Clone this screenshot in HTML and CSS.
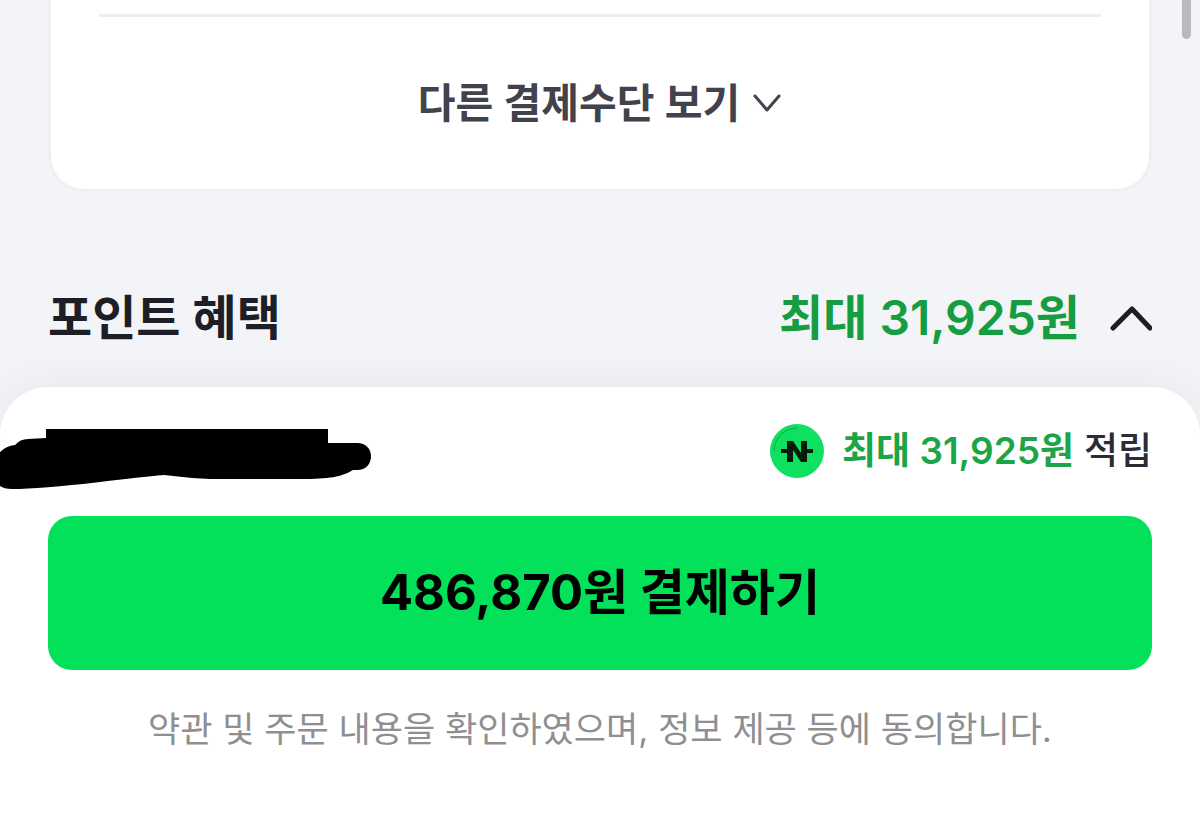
FILE: index.html
```html
<!DOCTYPE html>
<html lang="ko">
<head>
<meta charset="utf-8">
<meta name="viewport" content="width=device-width, initial-scale=1">
<title>결제하기</title>
<link rel="stylesheet" href="styles.css">
</head>
<body>
<main class="content">
  <section class="card">
    <hr class="divider">
    <button class="more" type="button">다른 결제수단 보기
      <svg class="more-icon" viewBox="0 0 30 20" aria-hidden="true"><path d="M3 3L15 17L27 3"/></svg>
    </button>
  </section>
  <section class="benefit">
    <h2 class="benefit-title">포인트 혜택</h2>
    <button class="benefit-toggle" type="button">최대 31,925원
      <svg class="benefit-icon" viewBox="0 0 44 28" aria-hidden="true"><path d="M5 24L24 5L42 24"/></svg>
    </button>
  </section>
</main>
<div class="scroll-thumb"></div>
<footer class="sheet">
  <div class="summary">
    <svg class="scribble" viewBox="0 0 372 64" aria-hidden="true"><path d="M0 26Q6 20 15 19Q20 13 28 13L46 12V3H328V17H357C366 17 371 23 371 30C371 38 366 44 357 44H353C341 51 330 53 300 53H210Q188 52 164 49Q140 51 100 56Q40 63 12 63Q4 63 0 60Z"/></svg>
    <p class="reward">
      <svg class="coin" viewBox="0 0 54 54" aria-hidden="true"><circle class="coin-face" cx="27" cy="27" r="27"/><path class="coin-rim" d="M4 27A23 23 0 0 1 27 4"/><path class="coin-mark" d="M17 17H23L31 29V17H37V25H43V29H37V38H31L23 26V38H17V29H11V25H17Z"/></svg>
      <span><strong class="amount">최대 31,925원</strong> 적립</span>
    </p>
  </div>
  <button class="pay" type="button">486,870원 결제하기</button>
  <p class="terms">약관 및 주문 내용을 확인하였으며, 정보 제공 등에 동의합니다.</p>
</footer>
</body>
</html>
```
FILE: styles.css
```css
* {
  box-sizing: border-box;
}

body {
  position: relative;
  display: flex;
  flex-direction: column;
  min-height: 100vh;
  margin: 0;
  background: #f3f4f7;
  color: #1e1e26;
  font-family: Inter, "Noto Sans CJK KR", sans-serif;
}

button {
  border: 0;
  background: none;
  color: inherit;
  font-family: inherit;
  cursor: pointer;
}

h2,
p {
  margin: 0;
}

.content {
  padding: 0 48px;
}

.card {
  padding: 14px 48px 56px;
  border: 3px solid #eeeff2;
  border-top: 0;
  border-radius: 0 0 36px 36px;
  background: #fff;
}

.divider {
  height: 3px;
  margin: 0 0 56px;
  border: 0;
  background: #eeeef0;
}

.more {
  display: flex;
  align-items: center;
  justify-content: center;
  gap: 12px;
  width: 100%;
  padding: 0;
  color: #42424c;
  font-size: 41px;
  font-weight: 600;
  line-height: 60px;
}

.more-icon {
  width: 30px;
  height: 20px;
}

.more-icon path,
.benefit-icon path {
  fill: none;
  stroke: currentColor;
  stroke-width: 3;
  stroke-linecap: round;
  stroke-linejoin: round;
}

.benefit {
  display: flex;
  align-items: center;
  justify-content: space-between;
  padding: 92px 0 35px;
}

.benefit-title {
  font-size: 48px;
  font-weight: 600;
  line-height: 68px;
}

.benefit-toggle {
  display: flex;
  align-items: center;
  gap: 28px;
  padding: 0;
  color: #169c41;
  font-size: 48px;
  font-weight: 600;
  line-height: 68px;
}

.benefit-icon {
  width: 44px;
  height: 28px;
  color: #1e1e26;
}

.benefit-icon path {
  stroke-width: 5;
}

.scroll-thumb {
  position: absolute;
  top: 0;
  right: 9px;
  width: 9px;
  height: 39px;
  border-radius: 0 0 5px 5px;
  background: #b9babc;
}

.sheet {
  flex: 1;
  padding: 36px 48px 48px;
  border-radius: 48px 48px 0 0;
  background: #fff;
  box-shadow: 0 0 48px rgba(0, 0, 0, 0.06);
}

.summary {
  display: flex;
  align-items: center;
  justify-content: space-between;
  margin-bottom: 37px;
}

.scribble {
  width: 372px;
  height: 64px;
  margin: 3px 0 -11px -48px;
}

.reward {
  display: flex;
  align-items: center;
  gap: 18px;
  color: #2b2c35;
  font-size: 37px;
  font-weight: 500;
  line-height: 56px;
}

.amount {
  color: #1ba548;
  font-weight: 600;
}

.coin {
  width: 54px;
  height: 54px;
}

.coin-face {
  fill: #10e060;
}

.coin-rim {
  fill: none;
  stroke: #0ba547;
}

.coin-mark {
  fill: #071b0d;
}

.pay {
  display: block;
  width: 100%;
  padding: 39px 24px;
  border-radius: 24px;
  background: #03e15b;
  color: #000;
  font-size: 49px;
  font-weight: 700;
  line-height: 76px;
}

.terms {
  margin-top: 33px;
  color: #8f8f92;
  font-size: 35px;
  line-height: 52px;
  text-align: center;
}
```
